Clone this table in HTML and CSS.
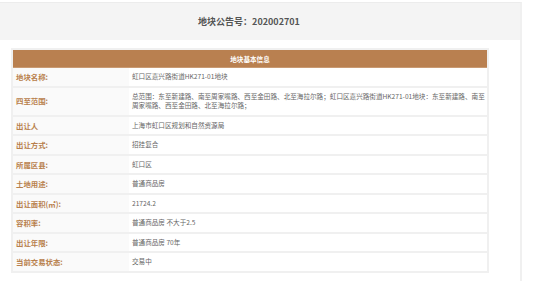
FILE: index.html
```html
<!DOCTYPE html>
<html lang="zh-CN">
<head>
  <meta charset="UTF-8">
  <title>地块公告</title>
  <link rel="stylesheet" href="styles.css">
</head>
<body>
  <div class="page">
    <div class="page-head">地块公告号：202002701</div>

    <!-- 地块基本信息 -->
    <table class="info">
      <tr>
        <th colspan="2">地块基本信息</th>
      </tr>
      <tr>
        <td class="label">地块名称:</td>
        <td class="value">虹口区嘉兴路街道HK271-01地块</td>
      </tr>
      <tr>
        <td class="label">四至范围:</td>
        <td class="value">总范围：东至新建路、南至周家嘴路、西至金田路、北至海拉尔路；虹口区嘉兴路街道HK271-01地块：东至新建路、南至周家嘴路、西至金田路、北至海拉尔路；</td>
      </tr>
      <tr>
        <td class="label">出让人</td>
        <td class="value">上海市虹口区规划和自然资源局</td>
      </tr>
      <tr>
        <td class="label">出让方式:</td>
        <td class="value">招挂复合</td>
      </tr>
      <tr>
        <td class="label">所属区县:</td>
        <td class="value">虹口区</td>
      </tr>
      <tr>
        <td class="label">土地用途:</td>
        <td class="value">普通商品房</td>
      </tr>
      <tr>
        <td class="label">出让面积(㎡):</td>
        <td class="value">21724.2</td>
      </tr>
      <tr>
        <td class="label">容积率:</td>
        <td class="value">普通商品房 不大于2.5</td>
      </tr>
      <tr>
        <td class="label">出让年限:</td>
        <td class="value">普通商品房 70年</td>
      </tr>
      <tr>
        <td class="label">当前交易状态:</td>
        <td class="value">交易中</td>
      </tr>
    </table>
  </div>
</body>
</html>
```

FILE: styles.css
```css
body {
  margin: 0;
  font-family: "Noto Sans CJK SC", "Microsoft YaHei", sans-serif;
  color: #666;
  background: #fff;
}
.page {
  margin-top: 2px;
  width: 520px;
  min-height: 279px;
  border-top: 1px solid #ececec;
  border-right: 2px solid #f0f0f0;
}
.page-head {
  height: 37px;
  display: flex;
  align-items: center;
  justify-content: center;
  padding-right: 22px;
  background-color: #f4f4f4;
  color: #555;
  font-size: 9px;
  font-weight: bold;
}
.info {
  margin: 8px 0 0 11px;
  width: 478px;
  border-collapse: collapse;
  border: 2px solid #f0f0f0;
  font-size: 6.6px;
}
.info th {
  height: 17px;
  padding: 0;
  background-color: #b98050;
  border: 1px solid #c99a72;
  color: #fff;
  font-weight: bold;
}
.info td {
  padding: 4px 3px;
  line-height: 9.5px;
  border-bottom: 2px solid #f0f0f0;
  vertical-align: middle;
}
.info .label {
  width: 110px;
  background-color: #fafafa;
  color: #b8804c;
  font-weight: bold;
  font-size: 7.4px;
}
.info .value {
  padding-right: 1px;
  color: #666;
}
```
